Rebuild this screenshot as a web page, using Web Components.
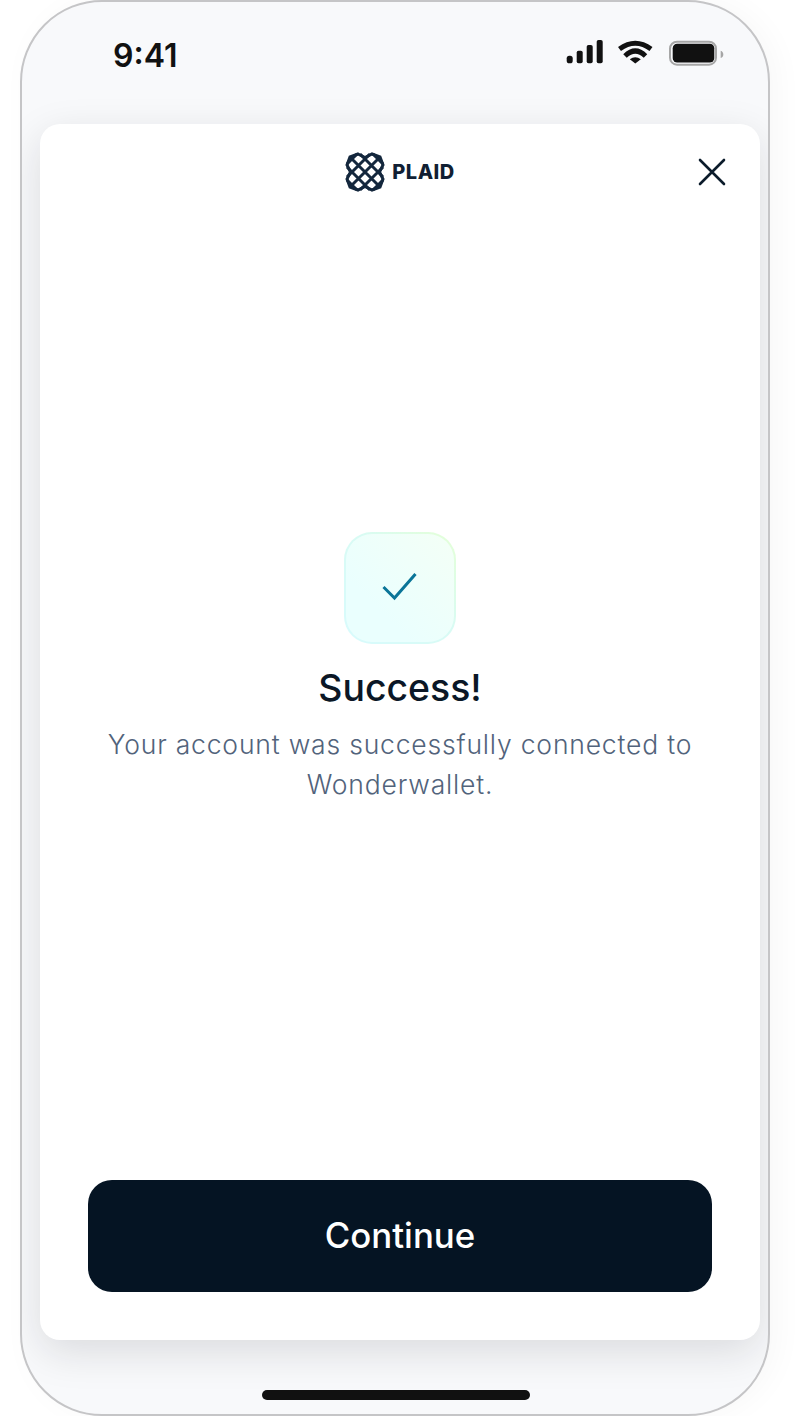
<!DOCTYPE html>
<html>
<head>
<meta charset="utf-8">
<title>Plaid success</title>
<style>
  html, body { margin: 0; height: 100%; background: #fff; }
  body { font-family: Inter, "Liberation Sans", sans-serif; }
</style>
</head>
<body>
<phone-frame>
  <status-bar slot="status" time="9:41"></status-bar>
  <link-card>
    <plaid-logo slot="logo"></plaid-logo>
    <success-panel
      heading="Success!"
      message="Your account was successfully connected to Wonderwallet."></success-panel>
    <primary-button slot="action">Continue</primary-button>
  </link-card>
</phone-frame>

<script>
// device outline, holds status bar, card and home indicator
class PhoneFrame extends HTMLElement {
  constructor() {
    super();
    this.attachShadow({ mode: "open" });
    this.shadowRoot.innerHTML = `
      <style>
        :host { display: block; width: 800px; height: 1416px; overflow: hidden; padding: 0 30px 0 20px; box-sizing: border-box; }
        .device {
          height: 1416px; box-sizing: border-box;
          border: 2px solid #c5c5c7; border-radius: 82px;
          background: #f8f9fb;
          display: flex; flex-direction: column;
          padding: 0 8px 0 18px;
          box-shadow: 8px 0 30px rgba(20, 25, 30, 0.03);
          overflow: hidden;
        }
        .home { width: 268px; height: 10px; border-radius: 5px; background: #111; margin: 50px auto 0; position: relative; left: -4px; }
      </style>
      <div class="device">
        <slot name="status"></slot>
        <div><slot></slot></div>
        <div class="home"></div>
      </div>`;
  }
}

class StatusBar extends HTMLElement {
  constructor() {
    super();
    this.attachShadow({ mode: "open" });
    this.shadowRoot.innerHTML = `
      <style>
        :host { display: flex; height: 122px; box-sizing: border-box; padding: 0 36px 0 73px; justify-content: space-between; align-items: flex-start; color: #111; }
        .time { font: 570 32px/1 Inter, "Liberation Sans", sans-serif; margin-top: 38px; }
        svg { display: block; margin-top: 38px; }
      </style>
      <span class="time"></span>
      <svg width="158" height="28" viewBox="0 0 158 28">
        <rect x="0.7" y="15.7" width="6" height="7.6" rx="2.6" fill="#111"/>
        <rect x="10.7" y="10.7" width="6" height="12.6" rx="1.8" fill="#111"/>
        <rect x="20.7" y="5" width="6" height="18.3" rx="1.8" fill="#111"/>
        <rect x="30.7" y="0" width="6" height="23.3" rx="1.8" fill="#111"/>
        <path d="M53.5 9 Q69.3 -2.6 85 9" fill="none" stroke="#111" stroke-width="5"/>
        <path d="M59 16 Q69.3 6 79.5 16" fill="none" stroke="#111" stroke-width="5"/>
        <path d="M63.8 19.3 Q69.3 15 74.8 19.3 L69.3 23.5 Z" fill="#111"/>
        <rect x="104" y="1.7" width="46" height="23" rx="7" fill="none" stroke="#a6a6a6" stroke-width="2"/>
        <rect x="106.7" y="3.8" width="41.6" height="18.8" rx="4.5" fill="#111"/>
        <path d="M154.7 10.7 C156.5 11.2 157.3 12.8 157.3 14.4 C157.3 16 156.5 17.5 154.7 18 Z" fill="#a6a6a6"/>
      </svg>`;
    this.shadowRoot.querySelector(".time").textContent = this.getAttribute("time");
  }
}

// white sheet: header row, centred content, action at the bottom
class LinkCard extends HTMLElement {
  constructor() {
    super();
    this.attachShadow({ mode: "open" });
    this.shadowRoot.innerHTML = `
      <style>
        :host { display: flex; flex-direction: column; width: 720px; height: 1216px; box-sizing: border-box; background: #fff; border-radius: 20px; padding: 0 48px 48px; box-shadow: 0 12px 40px rgba(20, 25, 30, 0.13); position: relative; }
        header { height: 96px; display: flex; justify-content: center; align-items: center; }
        .close { position: absolute; top: 34px; right: 34px; width: 28px; height: 28px; display: block; }
        main { flex: 1; display: flex; flex-direction: column; align-items: center; justify-content: center; padding-bottom: 64px; }
      </style>
      <header><slot name="logo"></slot></header>
      <svg class="close" viewBox="0 0 28 28" fill="none" stroke="#0b1b2b" stroke-width="2.6" stroke-linecap="round">
        <path d="M2 2 L26 26 M26 2 L2 26"/>
      </svg>
      <main><slot></slot></main>
      <slot name="action"></slot>`;
  }
}

class PlaidLogo extends HTMLElement {
  constructor() {
    super();
    this.attachShadow({ mode: "open" });
    this.shadowRoot.innerHTML = `
      <style>
        :host { display: flex; align-items: center; gap: 7px; color: #111f33; }
        span { font: 800 20px/1 Inter, "Liberation Sans", sans-serif; letter-spacing: 0.5px; }
        svg { display: block; }
      </style>
      <svg width="40" height="40" viewBox="0 0 40 40" fill="none" stroke="#14273d" stroke-width="3" stroke-linejoin="miter">
        <path d="M13 2 L20 5.5 L27 2 L35 5 L38 13 L34.5 20 L38 27 L35 35 L27 38 L20 34.5 L13 38 L5 35 L2 27 L5.5 20 L2 13 L5 5 Z"/>
        <path d="M5 5 L35 35 M15 2 L38 25 M28 2 L38 12 M2 15 L25 38 M2 28 L12 38 M35 5 L5 35 M25 2 L2 25 M12 2 L2 12 M38 15 L15 38 M38 28 L28 38"/>
      </svg>
      <span>PLAID</span>`;
  }
}

class SuccessPanel extends HTMLElement {
  constructor() {
    super();
    this.attachShadow({ mode: "open" });
    this.shadowRoot.innerHTML = `
      <style>
        :host { display: flex; flex-direction: column; align-items: center; text-align: center; width: 100%; }
        .badge { width: 112px; height: 112px; border-radius: 28px; box-sizing: border-box; border: 2px solid transparent;
          background: linear-gradient(225deg, #f4fff6, #eafffe 70%) padding-box, linear-gradient(225deg, #e4ffd6, #d8fbf4 45%, #d8fbfd) border-box;
          display: flex; align-items: center; justify-content: center; }
        .badge svg { margin-bottom: 2px; }
        h1 { margin: 20px 0 0; font: 500 37.4px/48px Inter, "Liberation Sans", sans-serif; color: #0b1726; }
        p { margin: 12px 0 0; width: 624px; font: 350 26.5px/40px Inter, "Liberation Sans", sans-serif; color: #52637b; letter-spacing: 0.81px; }
      </style>
      <div class="badge">
        <svg width="36" height="32" viewBox="0 0 36 32" fill="none">
          <path d="M1.5 16 L12.5 27 L33.5 3" stroke="#0a7598" stroke-width="3"/>
        </svg>
      </div>
      <h1></h1>
      <p></p>`;
    this.shadowRoot.querySelector("h1").textContent = this.getAttribute("heading");
    this.shadowRoot.querySelector("p").textContent = this.getAttribute("message");
  }
}

class PrimaryButton extends HTMLElement {
  constructor() {
    super();
    this.attachShadow({ mode: "open" });
    this.shadowRoot.innerHTML = `
      <style>
        :host { display: block; }
        button { display: block; width: 100%; height: 112px; border: 0; border-radius: 24px; padding: 0 0 2px; background: #051423; color: #fff; font: 500 34.8px/1 Inter, "Liberation Sans", sans-serif; }
      </style>
      <button><slot></slot></button>`;
  }
}

customElements.define("phone-frame", PhoneFrame);
customElements.define("status-bar", StatusBar);
customElements.define("link-card", LinkCard);
customElements.define("plaid-logo", PlaidLogo);
customElements.define("success-panel", SuccessPanel);
customElements.define("primary-button", PrimaryButton);
</script>
</body>
</html>
